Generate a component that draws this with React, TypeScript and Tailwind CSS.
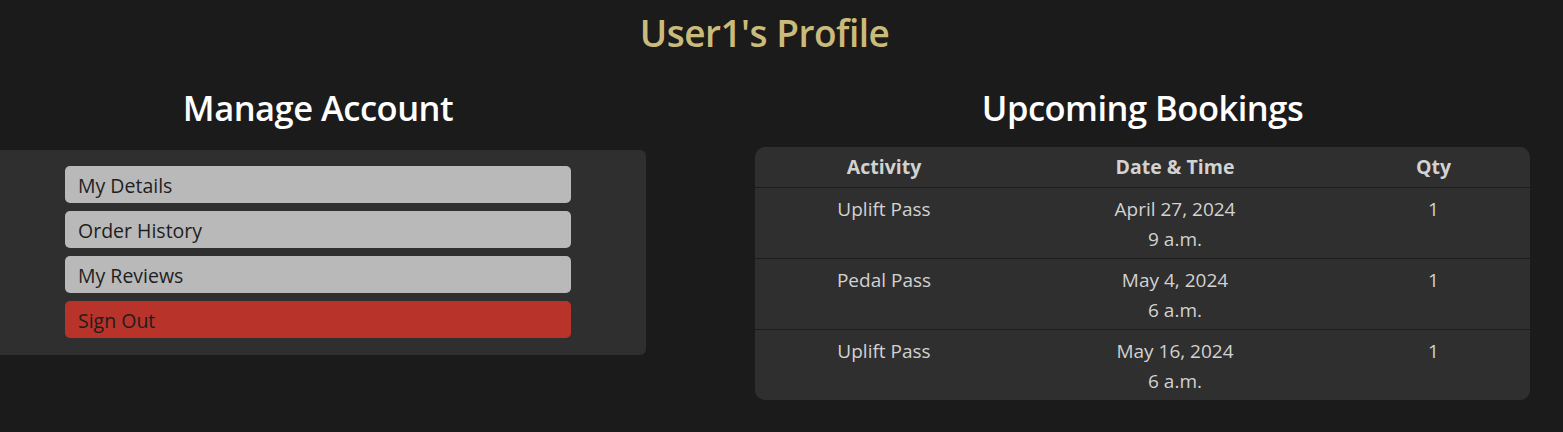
import React from "react";

const bookings = [
    { activity: "Uplift Pass", date: "April 27, 2024", time: "9 a.m.", qty: 1 },
    { activity: "Pedal Pass", date: "May 4, 2024", time: "6 a.m.", qty: 1 },
    { activity: "Uplift Pass", date: "May 16, 2024", time: "6 a.m.", qty: 1 },
];

const links = ["My Details", "Order History", "My Reviews"];

const App = () => {
    return (
        <div className="min-h-[432px] bg-[#1b1b1b] font-['Open_Sans',sans-serif]">
            <h1 className="pt-[10px] pr-[34px] text-center text-[37px] leading-[46px] font-semibold tracking-[-0.5px] text-[#cbbb7a]">
                User1's Profile
            </h1>
            <div className="mt-[32px] flex">
                <div className="w-[646px]">
                    <h2 className="pr-[10px] text-center text-[34.5px] leading-[40px] font-semibold tracking-[-0.5px] text-white">
                        Manage Account
                    </h2>
                    <div className="mt-[22px] flex flex-col gap-[8px] rounded-r-md bg-[#2f2f2f] pt-[16px] pb-[17px] pl-[65px]">
                        {links.map((l) => (
                            <button
                                key={l}
                                className="h-[37px] w-[506px] rounded-[5px] bg-[#b9b9b9] pt-[2px] pl-[13px] text-left text-[19.5px] text-[#1e1e1e]"
                            >
                                {l}
                            </button>
                        ))}
                        <button className="h-[37px] w-[506px] rounded-[5px] bg-[#b8332a] pt-[2px] pl-[13px] text-left text-[19.5px] text-[#1e1e1e]">
                            Sign Out
                        </button>
                    </div>
                </div>
                <div className="ml-[109px] w-[775px]">
                    <h2 className="text-center text-[34.5px] leading-[40px] font-semibold tracking-[-0.5px] text-white">
                        Upcoming Bookings
                    </h2>
                    <div className="mt-[19px] overflow-hidden rounded-[10px] bg-[#2f2f2f] text-[19px] text-[#d2d2d2]">
                        <div className="grid h-[41px] grid-cols-[258px_324px_193px] items-center border-b border-[#1c1c1c] text-center text-[19.5px] font-bold">
                            <div>Activity</div>
                            <div>Date &amp; Time</div>
                            <div>Qty</div>
                        </div>
                        {bookings.map((b, i) => (
                            <div
                                key={i}
                                className={`grid grid-cols-[258px_324px_193px] pt-[6px] text-center leading-[30px] ${
                                    i < bookings.length - 1 ? "h-[71px] border-b border-[#1c1c1c]" : "h-[70px]"
                                }`}
                            >
                                <div>{b.activity}</div>
                                <div>
                                    <p>{b.date}</p>
                                    <p>{b.time}</p>
                                </div>
                                <div>{b.qty}</div>
                            </div>
                        ))}
                    </div>
                </div>
            </div>
        </div>
    );
};

export default App;
